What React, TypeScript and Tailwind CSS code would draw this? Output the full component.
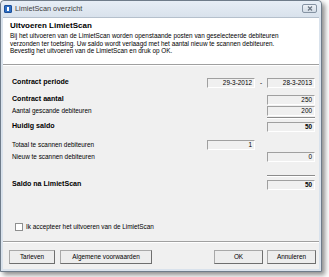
import React from 'react'

const font = { fontFamily: '"Liberation Sans", Arial, sans-serif' }

function Field({ value, bold = false }: { value: string; bold?: boolean }) {
  return (
    <div
      className={`h-[10px] w-[48px] flex items-center justify-end pr-[2px] bg-[#f0f0f0] border border-t-[#a0a0a0] border-l-[#a0a0a0] border-r-white border-b-white text-[6.4px] leading-none ${bold ? 'font-bold' : ''}`}
    >
      {value}
    </div>
  )
}

function Row({
  label,
  bold = false,
  a,
  b,
  dash = false,
  boldValue = false,
  className = '',
}: {
  label: string
  bold?: boolean
  a?: string
  b?: string
  dash?: boolean
  boldValue?: boolean
  className?: string
}) {
  return (
    <div className={`flex items-center h-[10px] ${className}`}>
      <div className={`flex-1 leading-none ${bold ? 'font-bold text-[7.1px]' : 'text-[6.4px]'}`}>{label}</div>
      <div className="w-[48px]">{a !== undefined && <Field value={a} />}</div>
      <div className="w-[12px] flex justify-center text-[6.4px] leading-none">{dash ? '-' : ''}</div>
      <div className="w-[48px]">{b !== undefined && <Field value={b} bold={boldValue} />}</div>
    </div>
  )
}

function Divider({ className = '' }: { className?: string }) {
  return (
    <div className={`flex ${className}`}>
      <div className="flex-1" />
      <div className="w-[48px] h-[2px] border-t border-t-[#8c8c8c] border-b border-b-white" />
    </div>
  )
}

function Button({ children, className = '' }: { children: React.ReactNode; className?: string }) {
  return (
    <div
      className={`h-[14px] flex items-center justify-center bg-[#ededed] border border-[#a8a8a8] border-r-[#6e6e6e] border-b-[#6e6e6e] text-[6.4px] leading-none ${className}`}
    >
      {children}
    </div>
  )
}

export default function App() {
  return (
    <div className="w-[329px] h-[277px] bg-white overflow-hidden text-black" style={font}>
      {/* Window */}
      <div className="w-[322px] h-[272px] flex flex-col bg-[#d9e2ec] border border-[#6f7c8a] rounded-t-[4px] shadow-[3px_3px_5px_rgba(0,0,0,0.45)]">
        {/* Title bar */}
        <div className="h-[16px] flex items-center bg-gradient-to-b from-[#e7eef6] to-[#d9e2ec] rounded-t-[4px]">
          <div className="ml-[3px] w-[8px] h-[8px] rounded-[1px] bg-[#2f6fc4] border border-[#1c4f98] flex items-center justify-center">
            <div className="w-[2px] h-[4px] bg-white" />
          </div>
          <div className="ml-[3px] text-[7.3px] leading-none text-[#404040]">LimietScan overzicht</div>
          <div className="flex-1" />
          <div className="mr-[4px] mt-[-1px] w-[15px] h-[9px] rounded-[2px] border border-[#8593a3] bg-gradient-to-b from-[#eef2f7] to-[#d3dce6] flex items-center justify-center">
            <svg width="6" height="5" viewBox="0 0 6 5">
              <path d="M1 0.5 L5 4.5 M5 0.5 L1 4.5" stroke="#6b7684" strokeWidth="1.2" />
            </svg>
          </div>
        </div>

        {/* Client area */}
        <div className="flex-1 mx-[2px] mb-[2px] flex flex-col bg-[#f0f0f0] border-t border-t-[#b5c0cc]">
          {/* Header */}
          <div className="h-[46px] bg-white pl-[7px] pt-[3px]">
            <div className="text-[8px] font-bold leading-[10px]">Uitvoeren LimietScan</div>
            <div className="mt-[1px] text-[6.4px] leading-[7.7px]">
              Bij het uitvoeren van de LimietScan worden openstaande posten van geselecteerde debiteuren
              <br />
              verzonden ter toetsing. Uw saldo wordt verlaagd met het aantal nieuw te scannen debiteuren.
              <br />
              Bevestig het uitvoeren van de LimietScan en druk op OK.
            </div>
          </div>
          <div className="h-[2px] border-t border-t-[#a0a0a0] border-b border-b-white" />

          {/* Body */}
          <div className="flex-1 flex flex-col pl-[9px] pr-[4px]">
            <Row className="mt-[12px]" label="Contract periode" bold a="29-3-2012" dash b="28-3-2013" />
            <Row className="mt-[7px]" label="Contract aantal" bold b="250" />
            <Row className="mt-[1px]" label="Aantal gescande debiteuren" b="200" />
            <Divider className="mt-[1px]" />
            <Row className="mt-[3px]" label="Huidig saldo" bold b="50" boldValue />
            <Row className="mt-[8px]" label="Totaal te scannen debiteuren" a="1" />
            <Row className="mt-[2px]" label="Nieuw te scannen debiteuren" b="0" />
            <Divider className="mt-[13px]" />
            <Row className="mt-[3px]" label="Saldo na LimietScan" bold b="50" boldValue />

            <div className="mt-[32px] h-[10px] flex items-center pl-[3px]">
              <div className="w-[8px] h-[8px] bg-white border border-[#8e8f8f]" />
              <div className="ml-[3px] text-[6.4px] leading-none">Ik accepteer het uitvoeren van de LimietScan</div>
            </div>
          </div>

          {/* Footer */}
          <div className="h-[2px] border-t border-t-[#a0a0a0] border-b border-b-white" />
          <div className="flex items-center mt-[7px] mb-[5px] pl-[6px] pr-[3px]">
            <Button className="w-[46px]">Tarieven</Button>
            <Button className="ml-[5px] w-[92px]">Algemene voorwaarden</Button>
            <div className="flex-1" />
            <Button className="w-[49px]">OK</Button>
            <Button className="ml-[4px] w-[49px]">Annuleren</Button>
          </div>
        </div>
      </div>
    </div>
  )
}
